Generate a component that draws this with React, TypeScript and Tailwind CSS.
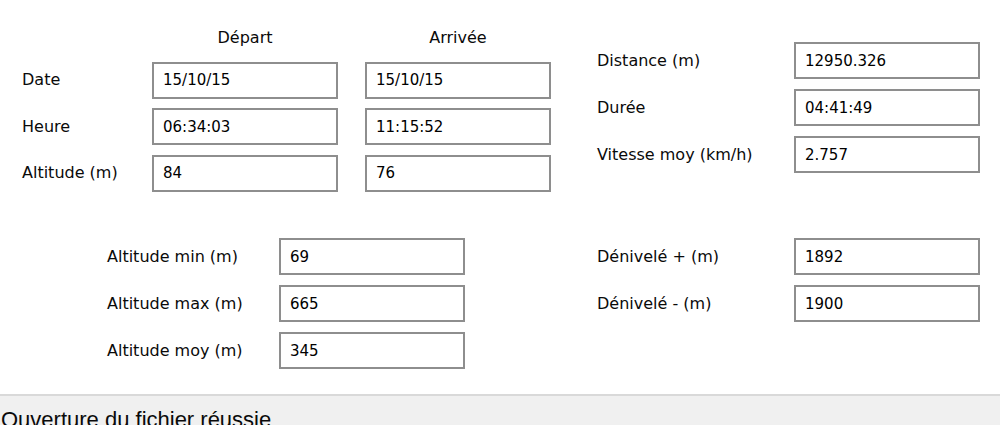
import React from "react";

interface Field {
  label: string;
  value: string;
}

const Box = ({ value }: { value: string }) => (
  <div className="flex h-[37px] w-[186px] items-center border-2 border-[#8e8e8e] bg-white pl-[9px] text-[15px] text-black">
    {value}
  </div>
);

const Label = ({ children }: { children: React.ReactNode }) => (
  <div className="flex items-center text-[16px] text-[#0a0a0a]">{children}</div>
);

const FieldGrid = ({ fields, cols }: { fields: Field[]; cols: string }) => (
  <div className={`grid gap-y-[10px] ${cols}`}>
    {fields.map((f, idx) => (
      <React.Fragment key={idx}>
        <Label>{f.label}</Label>
        <Box value={f.value} />
      </React.Fragment>
    ))}
  </div>
);

const App = () => {
  const rows = [
    { label: "Date", depart: "15/10/15", arrivee: "15/10/15" },
    { label: "Heure", depart: "06:34:03", arrivee: "11:15:52" },
    { label: "Altitude (m)", depart: "84", arrivee: "76" },
  ];

  const resume: Field[] = [
    { label: "Distance (m)", value: "12950.326" },
    { label: "Durée", value: "04:41:49" },
    { label: "Vitesse moy (km/h)", value: "2.757" },
  ];

  const altitudes: Field[] = [
    { label: "Altitude min (m)", value: "69" },
    { label: "Altitude max (m)", value: "665" },
    { label: "Altitude moy (m)", value: "345" },
  ];

  const denivele: Field[] = [
    { label: "Dénivelé + (m)", value: "1892" },
    { label: "Dénivelé - (m)", value: "1900" },
  ];

  return (
    <div className="flex h-[425px] w-[1000px] flex-col overflow-hidden bg-white font-['DejaVu_Sans',sans-serif] leading-[20px]">
      {/* départ / arrivée + résumé */}
      <div className="flex items-start">
        <div className="grid grid-cols-[103px_186px_186px] grid-rows-[24px_37px_37px_37px] gap-x-[27px] gap-y-[9.5px] pl-[22px] pt-[28px]">
          <div />
          <div className="text-center text-[16px] text-[#0a0a0a]">Départ</div>
          <div className="text-center text-[16px] text-[#0a0a0a]">Arrivée</div>
          {rows.map((r, idx) => (
            <React.Fragment key={idx}>
              <Label>{r.label}</Label>
              <Box value={r.depart} />
              <Box value={r.arrivee} />
            </React.Fragment>
          ))}
        </div>
        <div className="ml-[46px] pt-[42px]">
          <FieldGrid fields={resume} cols="grid-cols-[197px_186px]" />
        </div>
      </div>

      {/* altitudes + dénivelé */}
      <div className="mt-[46.5px] flex items-start">
        <div className="pl-[107px]">
          <FieldGrid fields={altitudes} cols="grid-cols-[172px_186px]" />
        </div>
        <div className="ml-[132px]">
          <FieldGrid fields={denivele} cols="grid-cols-[197px_186px]" />
        </div>
      </div>

      {/* barre d'état */}
      <div className="mt-auto h-[31px] border-t-2 border-[#d9d9d9] bg-[#f0f0f0] pl-[1px] pt-[11px] font-['Liberation_Sans',sans-serif] text-[22px] leading-[25px] text-[#0a0a0a]">
        Ouverture du fichier réussie
      </div>
    </div>
  );
};

export default App;
